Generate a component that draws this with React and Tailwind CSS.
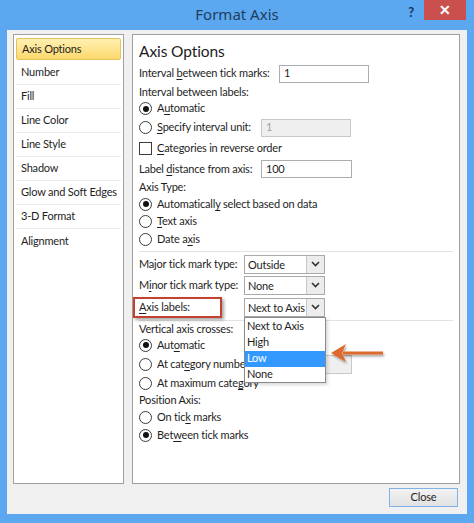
import React from "react";

const U = ({ children }) => <span className="underline underline-offset-[2px] decoration-[1px]">{children}</span>;

function Radio({ checked }) {
  return (
    <span className="w-[13px] h-[13px] rounded-full border border-[#3c3c3c] bg-white flex items-center justify-center shrink-0">
      {checked && <span className="w-[6px] h-[6px] rounded-full bg-[#111]" />}
    </span>
  );
}

function RadioRow({ checked, h, children }) {
  return (
    <div className={`flex items-center ${h}`}>
      <Radio checked={checked} />
      <span className="ml-[5px]">{children}</span>
    </div>
  );
}

function Chevron() {
  return (
    <svg width="9" height="6" viewBox="0 0 9 6">
      <path d="M1 1 L4.5 4.5 L8 1" fill="none" stroke="#333" strokeWidth="1.6" />
    </svg>
  );
}

function Select({ value, children }) {
  return (
    <div className="relative w-[81px] h-[19px] border border-[#a9a9a9] bg-white flex shrink-0">
      <span className="flex-1 pl-[3px] flex items-center leading-none">{value}</span>
      <span className="w-[18px] border-l border-[#c8c8c8] bg-[#ececec] flex items-center justify-center">
        <Chevron />
      </span>
      {children}
    </div>
  );
}

const listItems = ["Number", "Fill", "Line Color", "Line Style", "Shadow", "Glow and Soft Edges", "3-D Format", "Alignment"];

export default function App() {
  return (
    <div
      className="w-[474px] h-[523px] bg-[#5ba8f1] flex flex-col text-[11px] tracking-[-0.2px] text-[#1e1e1e] whitespace-nowrap"
      style={{ fontFamily: 'Lato, "Noto Sans", sans-serif' }}
    >
      {/* Title bar */}
      <div className="h-[30px] grid grid-cols-[1fr_auto_1fr] shrink-0">
        <div />
        <div className="flex items-center text-[15px] tracking-normal text-[#1f3d5c] pb-[2px]" style={{ fontFamily: '"Noto Sans", sans-serif' }}>Format Axis</div>
        <div className="flex justify-end items-start">
          <span className="mt-[3px] mr-[10px] text-[13px] font-bold text-[#1f3154]">?</span>
          <span className="w-[42px] h-[20px] mr-[8px] bg-[#c9504d] flex items-center justify-center text-white text-[14px] font-bold leading-none">✕</span>
        </div>
      </div>

      {/* Body */}
      <div className="mx-[7px] h-[484px] bg-[#f0f0f0] flex flex-col pt-[4px] pl-[6px] pr-[7px]">
        <div className="flex gap-[8px] h-[450px]">
          {/* Left list */}
          <div className="w-[111px] border border-[#a0a0a0] bg-white pt-[3px] px-[2px] flex flex-col">
            <div className="h-[22px] mb-[1px] rounded-[2px] border border-[#e2c160] bg-gradient-to-b from-[#fff0b0] to-[#fdd96b] flex items-center pl-[5px]">
              Axis Options
            </div>
            {listItems.map((t, i) => (
              <div key={t} className={`h-[24px] flex items-center pl-[5px] ${i < listItems.length - 1 ? "border-b border-[#ececec]" : ""}`}>
                {t}
              </div>
            ))}
          </div>

          {/* Right panel */}
          <div className="flex-1 border border-[#a0a0a0] bg-white pl-[6px] pr-[6px] pt-[6px] flex flex-col">
            <div className="h-[22px] flex items-center text-[15.5px] tracking-[-0.1px] leading-none">Axis Options</div>
            <div className="h-[21px] flex items-center">
              <span className="w-[140px] shrink-0">Interval <U>b</U>etween tick marks:</span>
              <span className="w-[90px] h-[18px] border border-[#abadb3] bg-white pl-[4px] flex items-center">1</span>
            </div>
            <div className="h-[16px] flex items-center">Interval between labels:</div>
            <RadioRow checked h="h-[17px]">A<U>u</U>tomatic</RadioRow>
            <div className="h-[21px] flex items-center">
              <Radio />
              <span className="ml-[5px] w-[104px] shrink-0"><U>S</U>pecify interval unit:</span>
              <span className="w-[90px] h-[18px] border border-[#c8c8c8] bg-[#efefef] pl-[4px] flex items-center text-[#a0a0a0]">1</span>
            </div>
            <div className="h-[21px] flex items-center">
              <span className="w-[13px] h-[13px] border border-[#3c3c3c] bg-white shrink-0" />
              <span className="ml-[5px]"><U>C</U>ategories in reverse order</span>
            </div>
            <div className="h-[20px] flex items-center">
              <span className="w-[122px] shrink-0">Label <U>d</U>istance from axis:</span>
              <span className="w-[91px] h-[18px] border border-[#abadb3] bg-white pl-[4px] flex items-center">100</span>
            </div>
            <div className="h-[17px] flex items-center">Axis Type:</div>
            <RadioRow checked h="h-[16px]">Automaticall<U>y</U> select based on data</RadioRow>
            <RadioRow h="h-[18px]"><U>T</U>ext axis</RadioRow>
            <RadioRow h="h-[18px]">Date a<U>x</U>is</RadioRow>
            <div className="mt-[3px] h-px bg-[#e3e3e3]" />
            <div className="mt-[2px] h-[20px] flex items-center">
              <span className="w-[105px] shrink-0">Major tick mark type:</span>
              <Select value="Outside" />
            </div>
            <div className="h-[22px] flex items-center">
              <span className="w-[105px] shrink-0">M<U>i</U>nor tick mark type:</span>
              <Select value="None" />
            </div>
            <div className="h-[22px] flex items-center relative z-10">
              <span className="w-[105px] shrink-0 flex items-center">
                <span className="-ml-[6px] w-[89px] h-[21px] border-2 border-[#c4412f] pl-[4px] flex items-center shadow-[2px_2px_3px_rgba(0,0,0,0.35)]">
                  <U>A</U>xis labels:
                </span>
              </span>
              <Select value="Next to Axis">
                <div className="absolute left-[-1px] top-[18px] w-[82px] h-[66px] border border-[#8a8a8a] bg-white flex flex-col pt-[1px] shadow-[2px_2px_3px_rgba(0,0,0,0.15)]">
                  <div className="h-[16px] flex items-center pl-[2px]">Next to Axis</div>
                  <div className="h-[16px] flex items-center pl-[2px]">High</div>
                  <div className="h-[16px] flex items-center pl-[2px] bg-[#3399ff] text-white">Low</div>
                  <div className="h-[16px] flex items-center pl-[2px]">None</div>
                </div>
              </Select>
              <svg className="absolute left-[190px] top-[45px]" width="58" height="24" viewBox="0 0 58 24">
                <defs>
                  <filter id="sh" x="-20%" y="-50%" width="140%" height="200%">
                    <feDropShadow dx="1" dy="2" stdDeviation="1.2" floodColor="#000" floodOpacity="0.35" />
                  </filter>
                </defs>
                <g filter="url(#sh)">
                  <path d="M14 10.5 L54 10.5 L54 13.5 L14 13.5 Z" fill="#df6a2e" />
                  <path d="M2 12 L17 3 L13 12 L17 21 Z" fill="#df6a2e" />
                </g>
              </svg>
            </div>
            <div className="mt-[2px] h-px bg-[#e3e3e3]" />
            <div className="h-[16px] flex items-center">Vertical axis crosses:</div>
            <RadioRow checked h="h-[16px]">Aut<U>o</U>matic</RadioRow>
            <div className="h-[22px] flex items-center">
              <Radio />
              <span className="ml-[5px] w-[104px] shrink-0">At cat<U>e</U>gory number</span>
              <span className="w-[91px] h-[19px] border border-[#c8c8c8] bg-[#efefef]" />
            </div>
            <RadioRow h="h-[17px]">At maximum cate<U>g</U>ory</RadioRow>
            <div className="h-[17px] flex items-center">Position Axis:</div>
            <RadioRow h="h-[17px]">On tic<U>k</U> marks</RadioRow>
            <RadioRow checked h="h-[18px]">Bet<U>w</U>een tick marks</RadioRow>
          </div>
        </div>

        {/* Footer */}
        <div className="flex justify-end pt-[4px] pr-[2px]">
          <button className="w-[69px] h-[19px] border border-[#7fb2e6] bg-gradient-to-b from-[#f2f2f2] to-[#e2e2e2] flex items-center justify-center text-[#1e1e1e]">
            Close
          </button>
        </div>
      </div>
    </div>
  );
}
